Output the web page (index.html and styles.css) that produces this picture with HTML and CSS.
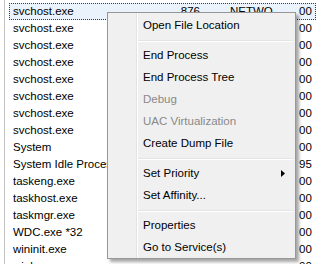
FILE: index.html
```html
<!DOCTYPE html>
<html lang="en">
<head>
  <meta charset="UTF-8" />
  <title>Processes</title>
  <link rel="stylesheet" href="styles.css">
</head>
<body>
  <div class="list">
    <div class="row focused"><span class="name">svchost.exe</span><span class="pid">876</span><span class="user">NETWO...</span><span class="cpu">00</span></div>
    <div class="row"><span class="name">svchost.exe</span><span class="pid"></span><span class="user"></span><span class="cpu">00</span></div>
    <div class="row"><span class="name">svchost.exe</span><span class="pid"></span><span class="user"></span><span class="cpu">00</span></div>
    <div class="row"><span class="name">svchost.exe</span><span class="pid"></span><span class="user"></span><span class="cpu">00</span></div>
    <div class="row"><span class="name">svchost.exe</span><span class="pid"></span><span class="user"></span><span class="cpu">00</span></div>
    <div class="row"><span class="name">svchost.exe</span><span class="pid"></span><span class="user"></span><span class="cpu">00</span></div>
    <div class="row"><span class="name">svchost.exe</span><span class="pid"></span><span class="user"></span><span class="cpu">00</span></div>
    <div class="row"><span class="name">svchost.exe</span><span class="pid"></span><span class="user"></span><span class="cpu">00</span></div>
    <div class="row"><span class="name">System</span><span class="pid"></span><span class="user"></span><span class="cpu">00</span></div>
    <div class="row"><span class="name">System Idle Process</span><span class="pid"></span><span class="user"></span><span class="cpu">95</span></div>
    <div class="row"><span class="name">taskeng.exe</span><span class="pid"></span><span class="user"></span><span class="cpu">00</span></div>
    <div class="row"><span class="name">taskhost.exe</span><span class="pid"></span><span class="user"></span><span class="cpu">00</span></div>
    <div class="row"><span class="name">taskmgr.exe</span><span class="pid"></span><span class="user"></span><span class="cpu">00</span></div>
    <div class="row"><span class="name">WDC.exe *32</span><span class="pid"></span><span class="user"></span><span class="cpu">00</span></div>
    <div class="row"><span class="name">wininit.exe</span><span class="pid"></span><span class="user"></span><span class="cpu">00</span></div>
    <div class="row"><span class="name">winlogon.exe</span><span class="pid"></span><span class="user"></span><span class="cpu">00</span></div>
  </div>

  <div class="menu">
    <div class="item">Open File Location</div>
    <div class="sep"></div>
    <div class="item">End Process</div>
    <div class="item">End Process Tree</div>
    <div class="item disabled">Debug</div>
    <div class="item disabled">UAC Virtualization</div>
    <div class="item">Create Dump File</div>
    <div class="sep"></div>
    <div class="item sub">Set Priority
      <svg class="arrow" width="4" height="7" viewBox="0 0 4 7"><polygon points="0,0 4,3.5 0,7" fill="#000"/></svg>
    </div>
    <div class="item">Set Affinity...</div>
    <div class="sep"></div>
    <div class="item">Properties</div>
    <div class="item">Go to Service(s)</div>
  </div>
</body>
</html>
```

FILE: styles.css
```css
body {
  margin: 0;
  width: 316px;
  height: 264px;
  overflow: hidden;
  background: white;
  font-family: 'Liberation Sans', Arial, sans-serif;
  font-size: 11.5px;
  color: #000;
  position: relative;
}
.list {
  margin-left: 4px;
  padding-top: 3px;
  border-left: 1px solid #c4c4c4;
  height: 100%;
}
.row {
  display: grid;
  grid-template-columns: 150px 37px 99px 30px;
  height: 17px;
  line-height: 17px;
  margin-left: 4px;
  padding-left: 4px;
  white-space: nowrap;
  box-sizing: border-box;
}
.row.focused {
  background: #eaf2fb;
  outline: 1px dotted #2b3f5c;
  outline-offset: -1px;
}
.name {
  overflow: hidden;
}
.pid {
  text-align: right;
}
.user {
  padding-left: 30px;
  overflow: hidden;
}
.menu {
  position: absolute;
  left: 107px;
  top: 12px;
  width: 187px;
  padding: 1px 0 0;
  background: #f0f0f0;
  border: 1px solid #979797;
  box-shadow: 3px 3px 3px rgba(0, 0, 0, 0.35);
  background-image: linear-gradient(to right, transparent 28px, #e2e3e3 28px, #e2e3e3 29px, #fff 29px, #fff 30px, transparent 30px);
}
.item {
  position: relative;
  height: 22px;
  line-height: 22px;
  padding-left: 35px;
  white-space: nowrap;
}
.item.disabled {
  color: #898989;
}
.arrow {
  position: absolute;
  right: 10px;
  top: 8px;
}
.sep {
  height: 8px;
  margin: 0 2px 0 30px;
  background: linear-gradient(to bottom, transparent 4px, #e2e3e3 4px, #e2e3e3 5px, #fff 5px, #fff 6px, transparent 6px);
}
```
